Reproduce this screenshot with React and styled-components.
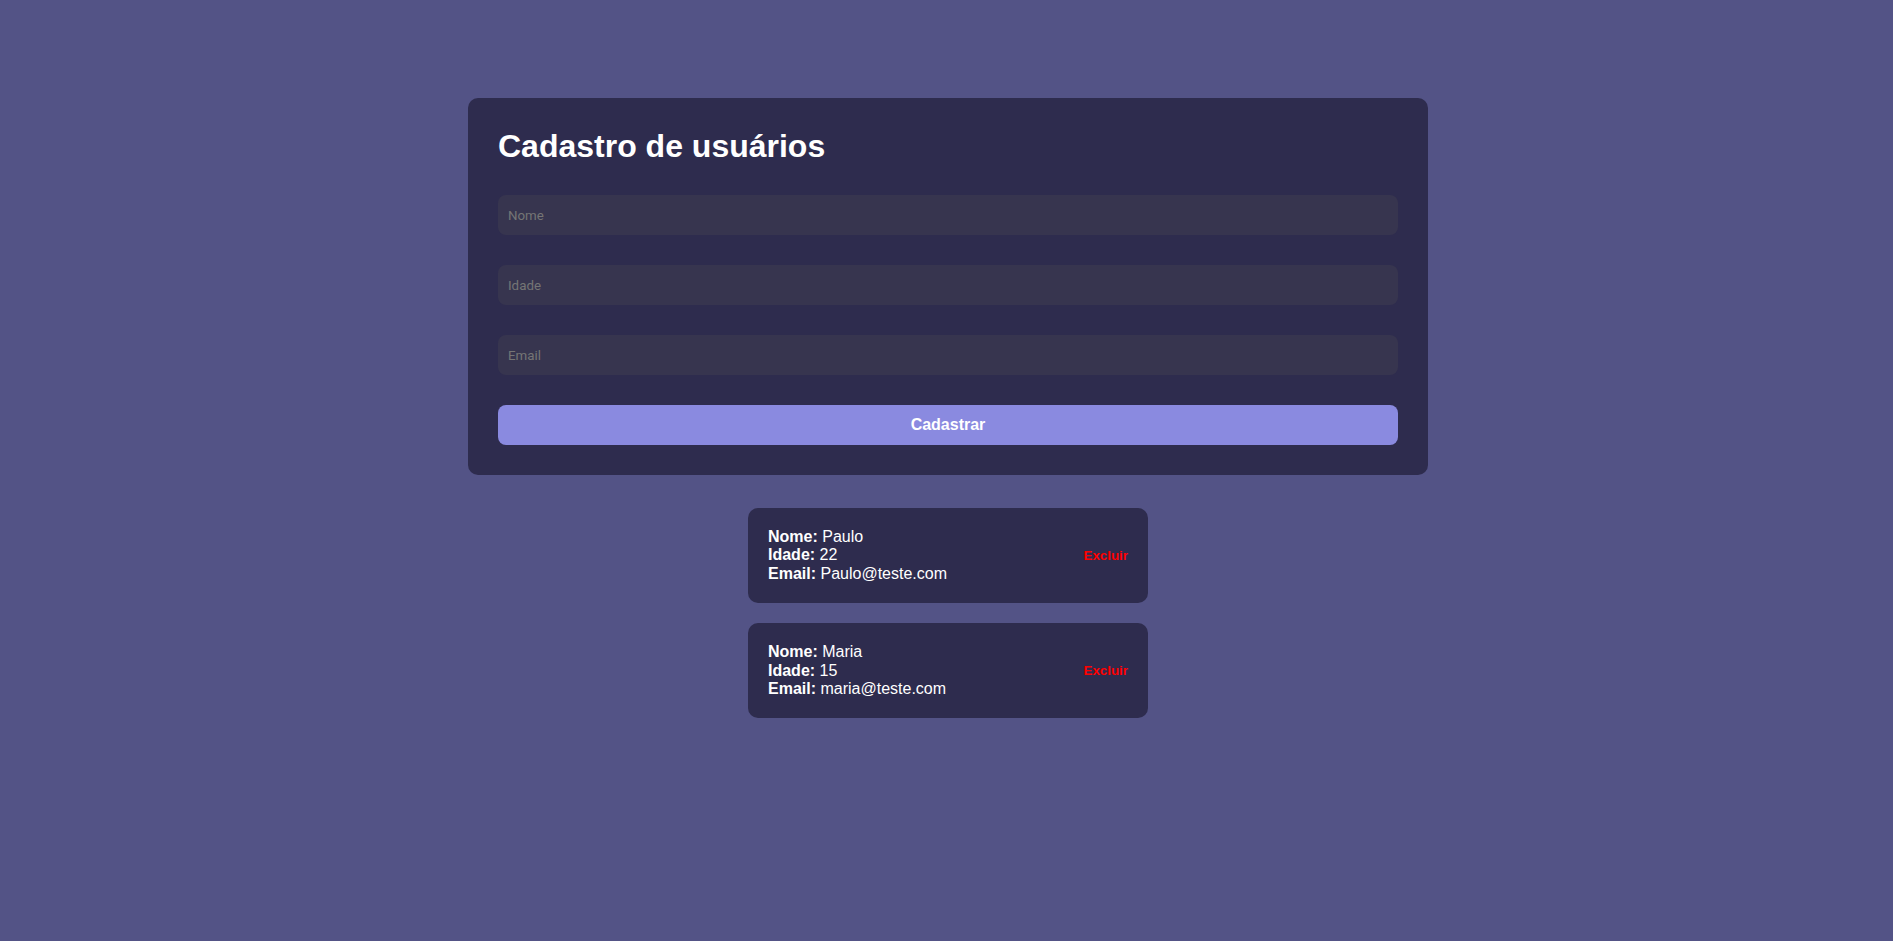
import React, { useState } from 'react';
import styled, { createGlobalStyle } from 'styled-components';

const GlobalStyle = createGlobalStyle`
  body {
    margin: 0;
    background: #535386;
    font-family: "Liberation Sans", Arial, sans-serif;
    color: #fff;
  }
`;

const Page = styled.main`
  display: flex;
  flex-direction: column;
  align-items: center;
  padding: 98px 0 0 3px;
`;

const FormCard = styled.form`
  width: 960px;
  box-sizing: border-box;
  padding: 30px;
  background: #2e2c4e;
  border-radius: 10px;
  display: flex;
  flex-direction: column;
  gap: 30px;
`;

const Title = styled.h1`
  margin: 0;
  font-size: 32px;
  line-height: 37px;
  font-weight: 700;
  color: #fff;
`;

const Input = styled.input`
  height: 40px;
  box-sizing: border-box;
  padding: 0 10px;
  border: none;
  border-radius: 8px;
  background: #37354f;
  color: #fff;
  font-family: Roboto, "Liberation Sans", sans-serif;
  font-size: 13.33px;
  outline: none;

  &::placeholder {
    color: #757575;
  }
`;

const SubmitButton = styled.button`
  height: 40px;
  border: none;
  border-radius: 8px;
  background: #8a8ae0;
  color: #fff;
  font-family: "Liberation Sans", Arial, sans-serif;
  font-size: 16px;
  font-weight: 700;
  cursor: pointer;
`;

const List = styled.ul`
  list-style: none;
  margin: 33px 0 0;
  padding: 0;
  display: flex;
  flex-direction: column;
  gap: 20px;
`;

const UserCard = styled.li`
  width: 400px;
  box-sizing: border-box;
  padding: 20px;
  background: #2e2c4e;
  border-radius: 10px;
  display: flex;
  align-items: center;
  justify-content: space-between;
`;

const Info = styled.div`
  font-size: 16px;
  line-height: 18.4px;
  color: #fff;

  p {
    margin: 0;
  }

  strong {
    font-weight: 700;
  }
`;

const DeleteButton = styled.button`
  border: none;
  background: transparent;
  padding: 0;
  color: #ff0000;
  font-family: "Liberation Sans", Arial, sans-serif;
  font-size: 13.33px;
  font-weight: 700;
  cursor: pointer;
`;

const initialUsers = [
  { id: 1, nome: 'Paulo', idade: 22, email: 'Paulo@teste.com' },
  { id: 2, nome: 'Maria', idade: 15, email: 'maria@teste.com' },
];

export default function App() {
  const [users, setUsers] = useState(initialUsers);

  return (
    <>
      <GlobalStyle />
      <Page>
        <FormCard onSubmit={e => e.preventDefault()}>
          <Title>Cadastro de usuários</Title>
          <Input placeholder="Nome" name="nome" />
          <Input placeholder="Idade" name="idade" type="number" />
          <Input placeholder="Email" name="email" type="email" />
          <SubmitButton type="submit">Cadastrar</SubmitButton>
        </FormCard>

        <List>
          {users.map(user => (
            <UserCard key={user.id}>
              <Info>
                <p><strong>Nome:</strong> {user.nome}</p>
                <p><strong>Idade:</strong> {user.idade}</p>
                <p><strong>Email:</strong> {user.email}</p>
              </Info>
              <DeleteButton
                type="button"
                onClick={() => setUsers(users.filter(u => u.id !== user.id))}
              >
                Excluir
              </DeleteButton>
            </UserCard>
          ))}
        </List>
      </Page>
    </>
  );
}
